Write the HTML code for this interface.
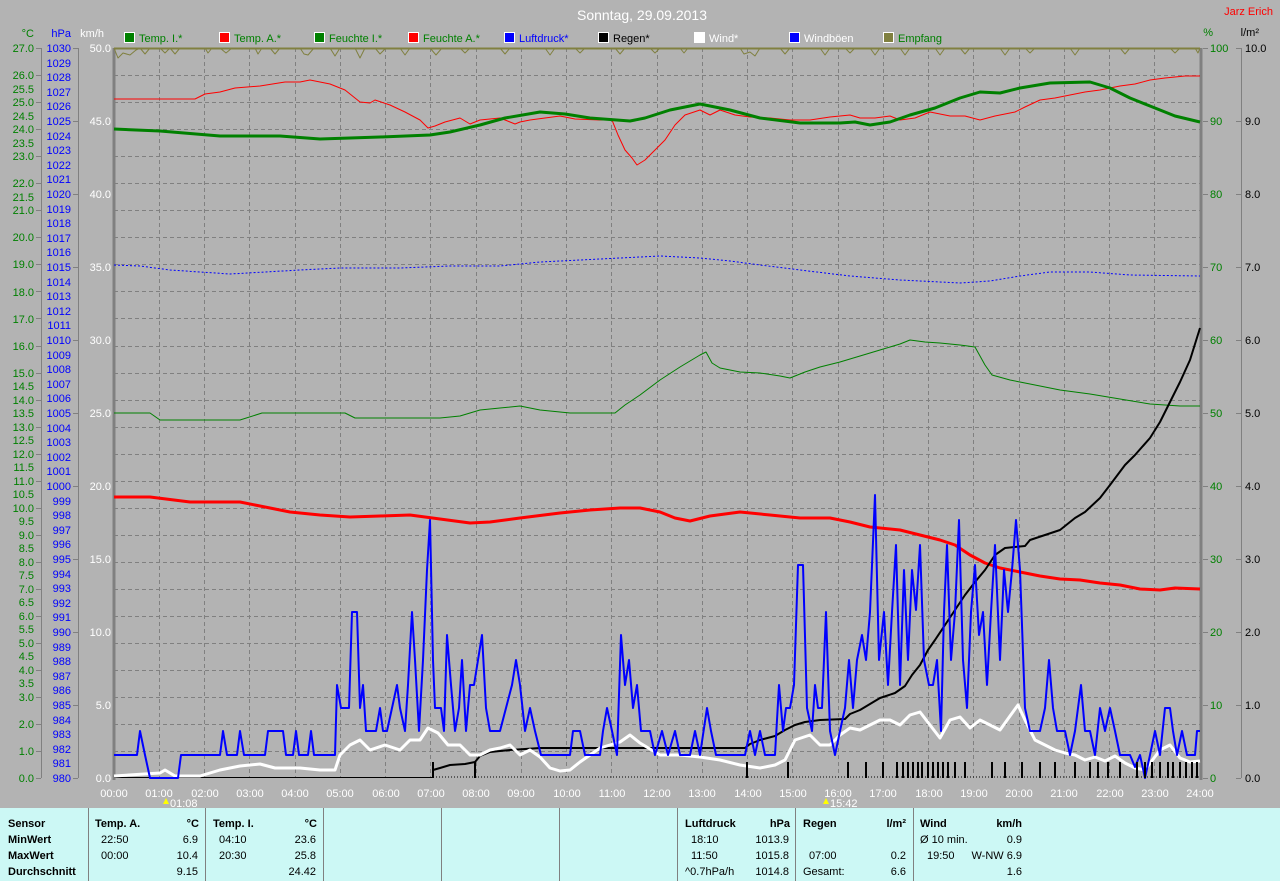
<!DOCTYPE html>
<html><head><meta charset="utf-8"><style>
html,body{margin:0;padding:0;background:#b3b3b3;}
svg{display:block;font-family:"Liberation Sans",sans-serif;font-size:11px;}
.g{fill:#008000}.b{fill:#0000ff}.w{fill:#fff}.k{fill:#000}
.tb{font-weight:bold;fill:#000}
</style></head><body>
<svg width="1280" height="881" viewBox="0 0 1280 881">
<rect width="1280" height="881" fill="#b3b3b3"/>
<text x="642" y="20" text-anchor="middle" class="w" font-size="14">Sonntag, 29.09.2013</text>
<text x="1273" y="15" text-anchor="end" fill="#ff0000" font-size="11">Jarz Erich</text>
<!-- legend -->
<g stroke="#fff" stroke-width="1">
<rect x="124.5" y="32.5" width="10" height="10" fill="#008000"/>
<rect x="219.5" y="32.5" width="10" height="10" fill="#ff0000"/>
<rect x="314.5" y="32.5" width="10" height="10" fill="#008000"/>
<rect x="408.5" y="32.5" width="10" height="10" fill="#ff0000"/>
<rect x="504.5" y="32.5" width="10" height="10" fill="#0000ff"/>
<rect x="598.5" y="32.5" width="10" height="10" fill="#000"/>
<rect x="694.5" y="32.5" width="10" height="10" fill="#fff"/>
<rect x="789.5" y="32.5" width="10" height="10" fill="#0000ff"/>
<rect x="883.5" y="32.5" width="10" height="10" fill="#808040"/>
</g>
<text x="139" y="42" class="g">Temp. I.*</text>
<text x="234" y="42" class="g">Temp. A.*</text>
<text x="329" y="42" class="g">Feuchte I.*</text>
<text x="423" y="42" class="g">Feuchte A.*</text>
<text x="519" y="42" class="b">Luftdruck*</text>
<text x="613" y="42" class="k">Regen*</text>
<text x="709" y="42" class="w">Wind*</text>
<text x="804" y="42" class="w">Windböen</text>
<text x="898" y="42" class="g">Empfang</text>
<!-- axis headers -->
<text x="34" y="37" text-anchor="end" class="g">°C</text>
<text x="71" y="37" text-anchor="end" class="b">hPa</text>
<text x="104" y="37" text-anchor="end" class="w">km/h</text>
<text x="1213" y="36" text-anchor="end" class="g">%</text>
<text x="1259" y="36" text-anchor="end" class="k">l/m²</text>
<!-- axis lines -->
<g stroke="#808080" stroke-width="1" fill="none">
<path d="M41.5 48V778M78.5 48V778M1241.5 48V778"/>
</g>
<!-- grid -->
<g stroke="#808080" stroke-width="1" stroke-dasharray="4,3" fill="none">
<path d="M114 751.5H1200M114 724.5H1200M114 697.5H1200M114 670.5H1200M114 643.5H1200M114 616.5H1200M114 589.5H1200M114 562.5H1200M114 535.5H1200M114 508.5H1200M114 481.5H1200M114 454.5H1200M114 427.5H1200M114 400.5H1200M114 373.5H1200M114 346.5H1200M114 318.5H1200M114 291.5H1200M114 264.5H1200M114 237.5H1200M114 210.5H1200M114 183.5H1200M114 156.5H1200M114 129.5H1200M114 102.5H1200M114 75.5H1200"/>
<path d="M159.5 48V778M204.5 48V778M249.5 48V778M295.5 48V778M340.5 48V778M385.5 48V778M430.5 48V778M476.5 48V778M521.5 48V778M566.5 48V778M611.5 48V778M657.5 48V778M702.5 48V778M747.5 48V778M792.5 48V778M838.5 48V778M883.5 48V778M928.5 48V778M973.5 48V778M1019.5 48V778M1064.5 48V778M1109.5 48V778M1154.5 48V778"/>
</g>
<!-- °C labels -->
<g class="g" text-anchor="end">
<text x="34" y="782">0.0</text><text x="34" y="755">1.0</text><text x="34" y="728">2.0</text><text x="34" y="701">3.0</text><text x="34" y="687">3.5</text><text x="34" y="674">4.0</text><text x="34" y="660">4.5</text><text x="34" y="647">5.0</text><text x="34" y="633">5.5</text><text x="34" y="620">6.0</text><text x="34" y="606">6.5</text><text x="34" y="593">7.0</text><text x="34" y="579">7.5</text><text x="34" y="566">8.0</text><text x="34" y="552">8.5</text><text x="34" y="539">9.0</text><text x="34" y="525">9.5</text><text x="34" y="512">10.0</text><text x="34" y="498">10.5</text><text x="34" y="485">11.0</text><text x="34" y="471">11.5</text><text x="34" y="458">12.0</text><text x="34" y="444">12.5</text><text x="34" y="431">13.0</text><text x="34" y="417">13.5</text><text x="34" y="404">14.0</text><text x="34" y="390">14.5</text><text x="34" y="377">15.0</text><text x="34" y="350">16.0</text><text x="34" y="323">17.0</text><text x="34" y="296">18.0</text><text x="34" y="268">19.0</text><text x="34" y="241">20.0</text><text x="34" y="214">21.0</text><text x="34" y="201">21.5</text><text x="34" y="187">22.0</text><text x="34" y="160">23.0</text><text x="34" y="147">23.5</text><text x="34" y="133">24.0</text><text x="34" y="120">24.5</text><text x="34" y="106">25.0</text><text x="34" y="93">25.5</text><text x="34" y="79">26.0</text><text x="34" y="52">27.0</text>
</g>
<g stroke="#808080"><path d="M36 778.5H41M36 751.5H41M36 724.5H41M36 697.5H41M36 670.5H41M36 643.5H41M36 616.5H41M36 589.5H41M36 562.5H41M36 535.5H41M36 508.5H41M36 481.5H41M36 454.5H41M36 427.5H41M36 400.5H41M36 373.5H41M36 346.5H41M36 318.5H41M36 291.5H41M36 264.5H41M36 237.5H41M36 210.5H41M36 183.5H41M36 156.5H41M36 129.5H41M36 102.5H41M36 75.5H41M36 48.5H41"/></g>
<!-- hPa labels -->
<g class="b" text-anchor="end">
<text x="71" y="782">980</text><text x="71" y="767">981</text><text x="71" y="753">982</text><text x="71" y="738">983</text><text x="71" y="724">984</text><text x="71" y="709">985</text><text x="71" y="694">986</text><text x="71" y="680">987</text><text x="71" y="665">988</text><text x="71" y="651">989</text><text x="71" y="636">990</text><text x="71" y="621">991</text><text x="71" y="607">992</text><text x="71" y="592">993</text><text x="71" y="578">994</text><text x="71" y="563">995</text><text x="71" y="548">996</text><text x="71" y="534">997</text><text x="71" y="519">998</text><text x="71" y="505">999</text><text x="71" y="490">1000</text><text x="71" y="475">1001</text><text x="71" y="461">1002</text><text x="71" y="446">1003</text><text x="71" y="432">1004</text><text x="71" y="417">1005</text><text x="71" y="402">1006</text><text x="71" y="388">1007</text><text x="71" y="373">1008</text><text x="71" y="359">1009</text><text x="71" y="344">1010</text><text x="71" y="329">1011</text><text x="71" y="315">1012</text><text x="71" y="300">1013</text><text x="71" y="286">1014</text><text x="71" y="271">1015</text><text x="71" y="256">1016</text><text x="71" y="242">1017</text><text x="71" y="227">1018</text><text x="71" y="213">1019</text><text x="71" y="198">1020</text><text x="71" y="183">1021</text><text x="71" y="169">1022</text><text x="71" y="154">1023</text><text x="71" y="140">1024</text><text x="71" y="125">1025</text><text x="71" y="110">1026</text><text x="71" y="96">1027</text><text x="71" y="81">1028</text><text x="71" y="67">1029</text><text x="71" y="52">1030</text>
</g>
<g stroke="#808080"><path d="M73 778.5H78M73 705.5H78M73 632.5H78M73 559.5H78M73 486.5H78M73 413.5H78M73 340.5H78M73 267.5H78M73 194.5H78M73 121.5H78M73 48.5H78"/></g>
<!-- km/h -->
<g class="w" text-anchor="end">
<text x="111" y="782">0.0</text><text x="111" y="709">5.0</text><text x="111" y="636">10.0</text><text x="111" y="563">15.0</text><text x="111" y="490">20.0</text><text x="111" y="417">25.0</text><text x="111" y="344">30.0</text><text x="111" y="271">35.0</text><text x="111" y="198">40.0</text><text x="111" y="125">45.0</text><text x="111" y="52">50.0</text>
</g>
<!-- % -->
<g class="g">
<text x="1210" y="782">0</text><text x="1210" y="709">10</text><text x="1210" y="636">20</text><text x="1210" y="563">30</text><text x="1210" y="490">40</text><text x="1210" y="417">50</text><text x="1210" y="344">60</text><text x="1210" y="271">70</text><text x="1210" y="198">80</text><text x="1210" y="125">90</text><text x="1210" y="52">100</text>
</g>
<g class="k">
<text x="1245" y="782">0.0</text><text x="1245" y="709">1.0</text><text x="1245" y="636">2.0</text><text x="1245" y="563">3.0</text><text x="1245" y="490">4.0</text><text x="1245" y="417">5.0</text><text x="1245" y="344">6.0</text><text x="1245" y="271">7.0</text><text x="1245" y="198">8.0</text><text x="1245" y="125">9.0</text><text x="1245" y="52">10.0</text>
</g>
<g stroke="#808080"><path d="M1203 778.5H1208M1203 705.5H1208M1203 632.5H1208M1203 559.5H1208M1203 486.5H1208M1203 413.5H1208M1203 340.5H1208M1203 267.5H1208M1203 194.5H1208M1203 121.5H1208M1203 48.5H1208M1236 778.5H1241M1236 705.5H1241M1236 632.5H1241M1236 559.5H1241M1236 486.5H1241M1236 413.5H1241M1236 340.5H1241M1236 267.5H1241M1236 194.5H1241M1236 121.5H1241M1236 48.5H1241"/></g>
<!-- plot borders -->
<path d="M114 48V780M1201 48V780" stroke="#808080" stroke-width="3"/>
<!-- time labels -->
<g class="w" text-anchor="middle">
<text x="114" y="797">00:00</text><text x="159" y="797">01:00</text><text x="205" y="797">02:00</text><text x="250" y="797">03:00</text><text x="295" y="797">04:00</text><text x="340" y="797">05:00</text><text x="386" y="797">06:00</text><text x="431" y="797">07:00</text><text x="476" y="797">08:00</text><text x="521" y="797">09:00</text><text x="567" y="797">10:00</text><text x="612" y="797">11:00</text><text x="657" y="797">12:00</text><text x="702" y="797">13:00</text><text x="748" y="797">14:00</text><text x="793" y="797">15:00</text><text x="838" y="797">16:00</text><text x="883" y="797">17:00</text><text x="929" y="797">18:00</text><text x="974" y="797">19:00</text><text x="1019" y="797">20:00</text><text x="1064" y="797">21:00</text><text x="1110" y="797">22:00</text><text x="1155" y="797">23:00</text><text x="1200" y="797">24:00</text>
</g>
<path d="M166 798l-3 6h6z" fill="#ffff00"/><text x="170" y="807" class="w">01:08</text>
<path d="M826 798l-3 6h6z" fill="#ffff00"/><text x="830" y="807" class="w">15:42</text>
<!-- curves -->
<g fill="none" stroke-linejoin="round">
<polyline stroke="#808040" stroke-width="1" points="114,48 118,58 123,53 130,55 136,50 140,48 145,54 150,48 160,48 165,53 170,48 175,54 180,48 205,48 208,53 212,48 220,48 226,53 232,48 255,48 258,54 262,48 270,48 275,54 280,48 300,48 304,54 308,55 314,48 330,48 335,56 340,48 355,48 360,58 365,48 375,48 380,54 386,48 400,48 405,55 410,48 430,48 436,55 442,48 460,48 465,53 470,48 500,48 505,54 510,48 545,48 550,55 555,48 575,48 580,53 585,48 615,48 620,54 625,48 650,48 655,53 660,48 680,48 684,53 688,48 740,48 744,54 750,52 755,56 760,48 780,48 785,54 790,48 820,48 825,55 830,48 845,48 850,53 855,48 870,48 875,55 880,48 900,48 905,55 910,48 935,48 940,55 945,48 960,48 965,54 970,48 1000,48 1005,55 1010,48 1025,48 1030,53 1035,48 1070,48 1075,55 1080,48 1120,48 1125,54 1130,48 1170,48 1175,53 1180,48 1195,48 1198,53 1200,48"/>
<polyline stroke="#ff0000" stroke-width="1" points="114,99 195,99 205,94 220,92 235,88 260,86 285,82 300,82 310,80 330,84 345,90 360,102 370,103 375,100 390,105 405,112 420,120 428,128 435,126 445,122 460,118 470,124 480,120 500,118 515,124 520,122 530,120 545,118 560,116 575,119 600,120 612,120 618,135 625,150 632,158 637,165 645,160 655,150 665,140 675,125 685,115 700,110 710,115 720,110 735,115 750,117 770,118 790,120 810,120 830,117 850,115 860,118 875,118 890,116 900,120 915,118 930,112 950,116 965,116 980,120 995,116 1015,112 1025,107 1040,100 1055,98 1070,95 1085,92 1100,90 1120,86 1135,84 1150,80 1165,78 1185,76 1200,76"/>
<polyline stroke="#008000" stroke-width="3" points="114,129 160,131 220,136 280,136 320,139 380,137 430,135 450,132 480,125 505,118 540,112 565,114 590,118 630,121 645,118 670,110 700,104 730,110 760,118 800,123 840,123 855,122 870,125 890,122 910,115 935,108 960,98 980,92 1000,93 1020,88 1050,83 1090,82 1110,88 1130,98 1150,106 1175,116 1200,122"/>
<polyline stroke="#0000ff" stroke-width="1" stroke-dasharray="2,2" points="114,265 140,266 170,270 230,274 300,270 340,268 400,268 450,266 500,266 540,262 580,260 620,258 660,256 700,258 730,261 760,265 800,270 850,276 900,280 960,283 990,281 1020,276 1050,272 1090,272 1130,275 1200,276"/>
<polyline stroke="#008000" stroke-width="1" points="114,413 150,413 160,420 240,420 262,413 345,413 355,418 440,418 460,416 480,410 500,408 520,406 540,410 570,413 615,413 625,405 640,395 660,380 680,367 700,355 706,352 712,363 720,368 740,372 760,373 780,376 790,378 805,372 820,367 840,362 860,356 880,350 900,344 910,340 925,342 940,343 960,345 975,347 985,365 992,375 1010,380 1030,384 1060,390 1090,394 1120,399 1150,404 1180,406 1200,406"/>
<polyline stroke="#ff0000" stroke-width="3" points="114,497 150,497 190,502 240,502 270,508 290,512 320,515 350,517 380,516 410,515 440,519 470,523 490,522 520,518 560,513 590,510 620,508 640,508 660,512 675,518 690,521 710,516 740,512 770,515 800,518 830,518 850,522 870,527 900,530 920,535 940,540 955,545 970,555 985,563 1000,568 1020,572 1040,576 1060,579 1080,580 1100,583 1120,585 1140,589 1160,590 1175,588 1200,589"/>
<polyline stroke="#000" stroke-width="1" stroke-dasharray="1,2" points="433,777 1200,777"/>
<polyline stroke="#000" stroke-width="1" points="114,777.5 433,777.5"/>
<polyline stroke="#000" stroke-width="2" points="433,770 440,768 450,765 465,764 475,762 480,756 490,752 510,750 540,748 745,748 750,744 760,740 775,736 785,730 795,725 805,722 820,720 845,719 850,714 860,710 870,704 880,698 895,693 905,686 912,675 920,665 928,650 935,640 945,625 955,610 965,595 975,582 985,570 995,555 1005,548 1025,546 1030,540 1045,535 1060,530 1075,518 1085,512 1100,498 1110,485 1125,465 1135,455 1150,438 1160,422 1170,402 1180,382 1190,360 1200,328"/>
<polyline stroke="#fff" stroke-width="3" points="114,776 160,773 165,770 175,776 200,776 220,770 240,766 260,764 275,768 300,768 320,770 335,770 340,755 350,745 360,740 370,750 385,745 400,750 410,740 420,740 428,728 438,733 448,745 460,745 470,755 480,755 490,750 500,748 510,745 520,755 530,750 540,757 550,768 560,771 570,770 580,762 590,755 600,748 610,745 620,742 630,735 640,743 660,755 680,755 700,757 720,760 740,765 760,768 775,765 785,760 795,740 810,735 820,745 830,745 840,735 850,728 860,730 870,725 880,720 890,720 900,725 910,715 920,712 930,725 940,738 950,720 960,717 970,728 980,720 990,725 1000,730 1010,716 1018,705 1025,720 1035,740 1045,745 1055,750 1065,753 1075,755 1085,760 1095,757 1105,761 1115,756 1125,763 1135,768 1145,770 1160,750 1170,745 1180,758 1190,762 1200,761"/>
<polyline stroke="#0000ff" stroke-width="2" points="114,755 137,755 140,731 145,755 150,778 178,778 181,755 220,755 223,731 227,755 237,755 240,731 244,755 265,755 268,731 283,731 286,755 293,755 296,731 299,755 308,755 311,731 314,755 335,755 337,685 341,708 349,708 352,612 357,612 360,708 363,685 366,731 376,731 380,708 383,731 387,731 392,708 397,685 400,708 405,731 408,685 412,612 415,660 419,731 423,660 427,570 430,520 433,660 435,708 441,708 444,731 447,635 451,685 455,731 459,708 462,660 466,731 470,685 474,685 478,660 482,635 486,708 490,731 500,731 506,708 512,685 516,660 520,685 525,731 530,708 535,731 541,755 570,755 573,731 580,731 585,755 600,755 603,731 607,708 612,731 617,755 621,635 625,685 629,660 633,708 637,685 641,731 650,731 655,755 662,731 668,755 675,731 680,755 690,755 695,731 700,755 707,708 711,731 716,755 745,755 750,731 755,755 760,731 765,755 775,755 779,685 783,731 786,708 790,708 794,685 798,565 803,565 807,708 812,731 815,685 818,708 822,708 826,612 830,731 835,755 840,731 845,708 849,660 853,708 857,660 862,635 866,660 870,612 875,495 879,660 884,612 888,685 892,612 896,545 900,685 904,570 908,660 912,570 916,610 920,545 924,660 929,685 933,685 937,660 941,731 944,612 947,545 951,660 955,612 959,520 963,660 967,708 971,612 975,565 979,635 983,612 987,685 991,612 995,545 1000,660 1004,570 1008,612 1012,570 1016,520 1020,570 1025,708 1030,731 1040,731 1045,708 1049,660 1053,708 1057,731 1065,731 1070,755 1075,731 1081,685 1085,731 1090,731 1095,755 1100,708 1105,731 1110,708 1115,731 1120,755 1130,755 1135,767 1140,755 1145,778 1150,755 1155,731 1160,755 1165,708 1170,708 1173,731 1177,755 1182,731 1187,755 1195,755 1197,731 1200,731"/>
</g>
<path d="M433 778V762M475 778V762M747 778V762M788 778V762M848 778V762M866 778V762M883 778V762M897 778V762M903 778V762M908 778V762M913 778V762M918 778V762M922 778V762M928 778V762M933 778V762M938 778V762M943 778V762M948 778V762M955 778V762M965 778V762M992 778V762M1005 778V762M1022 778V762M1040 778V762M1055 778V762M1075 778V762M1090 778V762M1098 778V762M1108 778V762M1120 778V762M1137 778V762M1145 778V762M1152 778V762M1160 778V762M1168 778V762M1173 778V762M1180 778V762M1186 778V762M1192 778V762M1197 778V762" stroke="#000" stroke-width="2"/>
<path d="M114 48.5H1200" stroke="#808040" stroke-width="2"/>
<!-- table -->
<rect x="0" y="808" width="1280" height="73" fill="#ccf8f5"/>
<path d="M88.5 808V881M205.5 808V881M323.5 808V881M441.5 808V881M559.5 808V881M677.5 808V881M795.5 808V881M913.5 808V881" stroke="#808080" stroke-width="1"/>
<g class="tb">
<text x="8" y="827">Sensor</text><text x="8" y="843">MinWert</text><text x="8" y="859">MaxWert</text><text x="8" y="875">Durchschnitt</text>
<text x="95" y="827">Temp. A.</text><text x="199" y="827" text-anchor="end">°C</text>
<text x="213" y="827">Temp. I.</text><text x="317" y="827" text-anchor="end">°C</text>
<text x="685" y="827">Luftdruck</text><text x="790" y="827" text-anchor="end">hPa</text>
<text x="803" y="827">Regen</text><text x="906" y="827" text-anchor="end">l/m²</text>
<text x="920" y="827">Wind</text><text x="1022" y="827" text-anchor="end">km/h</text>
</g>
<g class="k">
<text x="101" y="843">22:50</text><text x="198" y="843" text-anchor="end">6.9</text>
<text x="101" y="859">00:00</text><text x="198" y="859" text-anchor="end">10.4</text>
<text x="198" y="875" text-anchor="end">9.15</text>
<text x="219" y="843">04:10</text><text x="316" y="843" text-anchor="end">23.6</text>
<text x="219" y="859">20:30</text><text x="316" y="859" text-anchor="end">25.8</text>
<text x="316" y="875" text-anchor="end">24.42</text>
<text x="691" y="843">18:10</text><text x="789" y="843" text-anchor="end">1013.9</text>
<text x="691" y="859">11:50</text><text x="789" y="859" text-anchor="end">1015.8</text>
<text x="685" y="875">^0.7hPa/h</text><text x="789" y="875" text-anchor="end">1014.8</text>
<text x="809" y="859">07:00</text><text x="906" y="859" text-anchor="end">0.2</text>
<text x="803" y="875">Gesamt:</text><text x="906" y="875" text-anchor="end">6.6</text>
<text x="920" y="843">Ø 10 min.</text><text x="1022" y="843" text-anchor="end">0.9</text>
<text x="927" y="859">19:50</text><text x="1022" y="859" text-anchor="end">W-NW 6.9</text>
<text x="1022" y="875" text-anchor="end">1.6</text>
</g>
</svg>
</body></html>
